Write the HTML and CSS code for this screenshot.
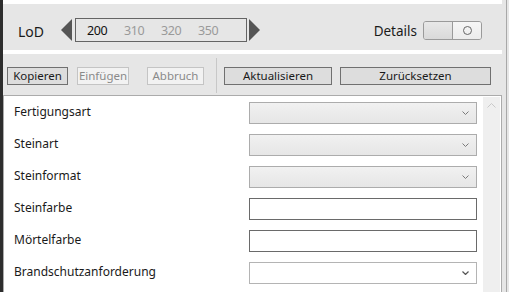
FILE: index.html
```html
<!DOCTYPE html>
<html lang="de">
  <head>
    <meta charset="UTF-8" />
    <meta name="viewport" content="width=device-width, initial-scale=1.0" />
    <title>Wandeigenschaften</title>
    <link rel="stylesheet" href="styles.css">
  </head>
  <body>
    <div class="window">
      <div class="main">
        <div class="strip"></div>
        <div class="lod-bar">
          <span class="lod-label">LoD</span>
          <span class="arrow arrow-left"></span>
          <div class="lod-box">
            <span class="lod-value active">200</span>
            <span class="lod-value">310</span>
            <span class="lod-value">320</span>
            <span class="lod-value">350</span>
          </div>
          <span class="arrow arrow-right"></span>
          <span class="details-label">Details</span>
          <div class="toggle">
            <span class="toggle-off"></span>
            <span class="toggle-on"><span class="ring"></span></span>
          </div>
        </div>
        <div class="strip"></div>
        <div class="toolbar">
          <button class="btn btn-copy">Kopieren</button>
          <button class="btn btn-paste" disabled>Einfügen</button>
          <button class="btn btn-cancel" disabled>Abbruch</button>
          <span class="divider"></span>
          <button class="btn btn-update">Aktualisieren</button>
          <button class="btn btn-reset">Zurücksetzen</button>
        </div>
        <div class="panel">
          <div class="rows">
            <div class="row">
              <span class="label">Fertigungsart</span>
              <div class="combo"><svg width="7" height="4" viewBox="0 0 7 4"><polyline points="0.5,0.5 3.5,3.5 6.5,0.5" fill="none" stroke="#7a7a7a" stroke-width="1"/></svg></div>
            </div>
            <div class="row">
              <span class="label">Steinart</span>
              <div class="combo"><svg width="7" height="4" viewBox="0 0 7 4"><polyline points="0.5,0.5 3.5,3.5 6.5,0.5" fill="none" stroke="#7a7a7a" stroke-width="1"/></svg></div>
            </div>
            <div class="row">
              <span class="label">Steinformat</span>
              <div class="combo"><svg width="7" height="4" viewBox="0 0 7 4"><polyline points="0.5,0.5 3.5,3.5 6.5,0.5" fill="none" stroke="#7a7a7a" stroke-width="1"/></svg></div>
            </div>
            <div class="row">
              <span class="label">Steinfarbe</span>
              <div class="textbox"></div>
            </div>
            <div class="row">
              <span class="label">Mörtelfarbe</span>
              <div class="textbox"></div>
            </div>
            <div class="row">
              <span class="label">Brandschutzanforderung</span>
              <div class="combo combo-open"><svg width="7" height="4" viewBox="0 0 7 4"><polyline points="0.5,0.5 3.5,3.5 6.5,0.5" fill="none" stroke="#555" stroke-width="1.2"/></svg></div>
            </div>
          </div>
          <div class="scrollbar">
            <svg width="9" height="5" viewBox="0 0 9 5"><polyline points="0.5,4.5 4.5,0.5 8.5,4.5" fill="none" stroke="#c9c9c9" stroke-width="1"/></svg>
          </div>
        </div>
      </div>
      <div class="rail"><span class="rail-line"></span></div>
    </div>
  </body>
</html>
```

FILE: styles.css
```css
body {
  margin: 0;
  font-family: "Noto Sans", "Open Sans", sans-serif;
  background-color: #e6e6e6;
  color: #1a1a1a;
}
.window {
  display: flex;
  height: 292px;
  border-left: 3px solid #2d2d2d;
  overflow: hidden;
}
.main {
  width: 499px;
  display: flex;
  flex-direction: column;
}
.rail {
  flex: 1;
  display: flex;
  padding-left: 4px;
}
.rail-line {
  width: 1px;
  background-color: #a8a8a8;
}
.strip {
  height: 4px;
  background-color: #fff;
}
.lod-bar {
  height: 40px;
  padding: 6px 20px 0 15px;
  display: flex;
  align-items: center;
}
.lod-label {
  font-size: 14px;
  margin-right: 17px;
  padding-top: 2px;
}
.arrow {
  width: 0;
  height: 0;
  border-top: 11px solid transparent;
  border-bottom: 11px solid transparent;
}
.arrow-left {
  border-right: 11px solid #555;
}
.arrow-right {
  border-left: 11px solid #555;
}
.lod-box {
  width: 159px;
  height: 22px;
  margin: 0 2px 0 3px;
  border: 1px solid #646464;
  display: flex;
  align-items: center;
  padding-left: 11px;
  box-sizing: content-box;
}
.lod-value {
  font-size: 12.5px;
  letter-spacing: -0.4px;
  color: #9a9a9a;
  width: 37px;
}
.lod-value.active {
  color: #111;
}
.details-label {
  margin-left: auto;
  margin-right: 6px;
  font-size: 13.5px;
  padding-top: 2px;
}
.toggle {
  width: 57px;
  height: 17px;
  border: 1px solid #9a9a9a;
  border-radius: 3px;
  display: flex;
  overflow: hidden;
}
.toggle-off {
  width: 28px;
  border-right: 1px solid #9a9a9a;
  background: linear-gradient(#e8e8e8, #d9d9d9);
}
.toggle-on {
  flex: 1;
  display: flex;
  align-items: center;
  justify-content: center;
  background: linear-gradient(#f6f6f6, #ececec);
}
.ring {
  width: 7px;
  height: 7px;
  border: 1.5px solid #666;
  border-radius: 50%;
}
.toolbar {
  height: 35px;
  padding: 4px 0 2px 4px;
  display: flex;
  align-items: center;
}
.btn {
  height: 18px;
  padding: 0;
  font-family: inherit;
  font-size: 11.5px;
  color: #1a1a1a;
  background-color: #dddddd;
  border: 1px solid #707070;
  line-height: 14px;
}
.btn:disabled {
  color: #8a8a8a;
  background-color: #f2f2f2;
  border-color: #c4c4c4;
}
.btn-copy {
  width: 61px;
  margin-right: 9px;
}
.btn-paste {
  width: 52px;
  margin-right: 18px;
}
.btn-cancel {
  width: 57px;
  margin-right: 12px;
}
.divider {
  align-self: stretch;
  width: 1px;
  background-color: #c8c8c8;
  margin-right: 7px;
}
.btn-update {
  width: 108px;
  margin-right: 8px;
}
.btn-reset {
  width: 151px;
}
.panel {
  flex: 1;
  display: flex;
  background-color: #fff;
  border: 1px solid #ababab;
  border-bottom: none;
}
.rows {
  flex: 1;
  padding: 1px 6px 0 10px;
}
.row {
  height: 32px;
  display: grid;
  grid-template-columns: 1fr 228px;
  align-items: center;
}
.label {
  font-size: 12px;
  padding-bottom: 3px;
}
.combo {
  height: 22px;
  box-sizing: border-box;
  border: 1px solid #acacac;
  background: linear-gradient(#f1f1f1, #e6e6e6);
  display: flex;
  align-items: center;
  justify-content: flex-end;
  padding-right: 7px;
}
.combo-open {
  background: #fff;
  border-color: #b4b4b4;
}
.textbox {
  height: 22px;
  box-sizing: border-box;
  border: 1px solid #6a6a6a;
  background-color: #fff;
}
.scrollbar {
  width: 17px;
  margin: 1px 1px 0 0;
  background-color: #efefef;
  display: flex;
  justify-content: center;
  padding-top: 6px;
  box-sizing: border-box;
}
.scrollbar svg {
  display: block;
}
```
